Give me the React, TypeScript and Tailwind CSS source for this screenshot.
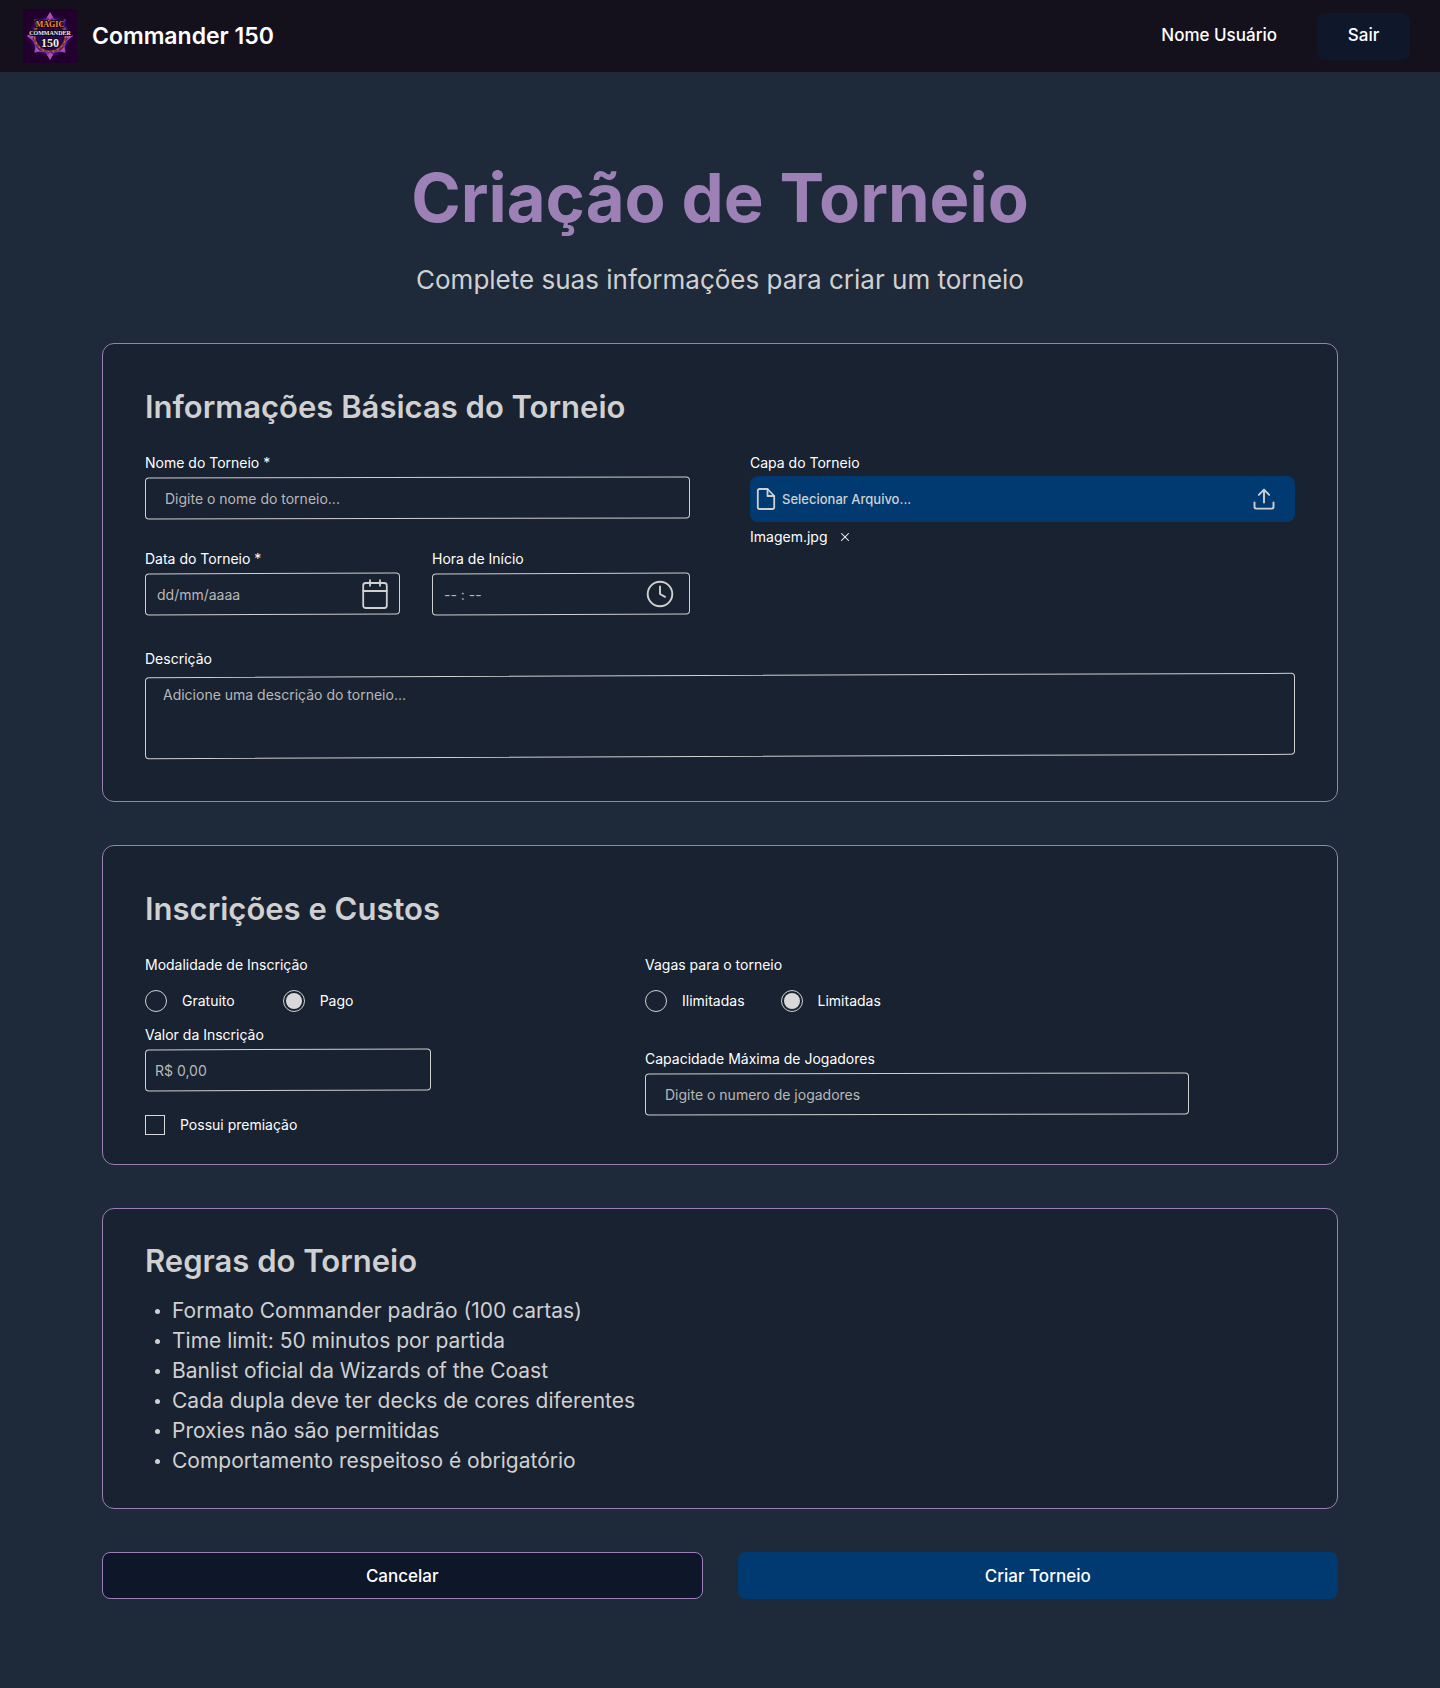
import type { InputHTMLAttributes, ReactNode } from "react";
import { X } from "lucide-react";

const rules = [
  "Formato Commander padrão (100 cartas)",
  "Time limit: 50 minutos por partida",
  "Banlist oficial da Wizards of the Coast",
  "Cada dupla deve ter decks de cores diferentes",
  "Proxies não são permitidas",
  "Comportamento respeitoso é obrigatório",
];

function Logo() {
  return (
    <svg viewBox="0 0 54 54" className="size-[54px] shrink-0" role="img" aria-label="Magic Commander 150">
      <defs>
        <radialGradient id="glow">
          <stop offset="0" stopColor="#2c0a5c" />
          <stop offset="0.75" stopColor="#5a10b4" />
          <stop offset="1" stopColor="#22002e" stopOpacity="0" />
        </radialGradient>
      </defs>
      <rect width="54" height="54" fill="#22002e" />
      <circle cx="27" cy="27" r="22" fill="url(#glow)" />
      <path
        d="M27 5l4 6 5 1 6-1-1 6 2 5 6 5-6 5-2 5 1 6-6-1-5 1-4 6-4-6-5-1-6 1 1-6-2-5-6-5 6-5 2-5-1-6 6 1 5-1z"
        fill="none"
        stroke="#8a3fae"
        strokeWidth="1.2"
      />
      <g fill="#b04fb0">
        <path d="M27 3l3 5-3 3-3-3z" />
        <path d="M27 51l3-5-3-3-3 3z" />
        <path d="M4 27l5-3 3 3-3 3z" />
        <path d="M50 27l-5-3-3 3 3 3z" />
        <path d="M12 11l5 1-4 4z" />
        <path d="M42 11l-5 1 4 4z" />
        <path d="M12 43l5-1-4-4z" />
        <path d="M42 43l-5-1 4-4z" />
      </g>
      <circle cx="27" cy="27" r="15.5" fill="#25074a" stroke="#7d3a2c" strokeWidth="2.2" />
      <circle cx="27" cy="27" r="15.5" fill="none" stroke="#c8702e" strokeWidth="1.2" strokeDasharray="2 3" />
      <g textAnchor="middle" fontFamily="Liberation Serif, serif" fontWeight="700" stroke="#12051c" paintOrder="stroke">
        <text x="27" y="18" fontSize="8" fill="#f0902a" strokeWidth="2">MAGIC</text>
        <text x="27" y="26" fontSize="6" fill="#f2ecf4" strokeWidth="2">COMMANDER</text>
        <text x="27" y="38" fontSize="12" fill="#f4efe0" strokeWidth="1.6">150</text>
      </g>
    </svg>
  );
}

function CalendarIcon() {
  return (
    <svg viewBox="0 0 26 30" className="h-[30px] w-[26px] shrink-0" fill="none" stroke="#d0d0d0" strokeWidth="1.8" strokeLinecap="round" strokeLinejoin="round" aria-hidden="true">
      <rect x="1.2" y="4" width="23.6" height="25" rx="2.5" />
      <path d="M1.2 12h23.6M8 1.2v5.6M18 1.2v5.6" />
    </svg>
  );
}

function ClockIcon() {
  return (
    <svg viewBox="0 0 28 28" className="size-7 shrink-0" fill="none" stroke="#d0d0d0" strokeWidth="1.9" strokeLinecap="round" strokeLinejoin="round" aria-hidden="true">
      <circle cx="14" cy="14" r="12.3" />
      <path d="M14 6.5V14l5 2.8" />
    </svg>
  );
}

function FileIcon() {
  return (
    <svg viewBox="0 0 20 24" className="h-6 w-5 shrink-0" fill="none" stroke="#d0d0d0" strokeWidth="1.8" strokeLinecap="round" strokeLinejoin="round" aria-hidden="true">
      <path d="M11.5 2H3.6C2.4 2 1.8 2.8 1.8 3.8v16.4c0 1 .7 1.8 1.8 1.8h12.8c1.1 0 1.8-.8 1.8-1.8V9z" />
      <path d="M11.5 2v7h6.7" />
    </svg>
  );
}

function UploadIcon() {
  return (
    <svg viewBox="0 0 22 22" className="size-[22px] shrink-0" fill="none" stroke="#d0d0d0" strokeWidth="1.9" strokeLinecap="round" strokeLinejoin="round" aria-hidden="true">
      <path d="M1.5 14.5v4.2c0 1.1.8 1.9 1.9 1.9h15.2c1.1 0 1.9-.8 1.9-1.9v-4.2" />
      <path d="M11 14.5V1.8M5.8 6.8L11 1.6l5.2 5.2" />
    </svg>
  );
}

function Card({ title, className, children }: { title: string; className: string; children: ReactNode }) {
  return (
    <section className={`rounded-xl border border-[#9b7fb6] bg-[#192230] px-[42px] ${className}`}>
      <h2 className="text-[31px] leading-10 font-semibold text-[#d0d0d0]">{title}</h2>
      {children}
    </section>
  );
}

interface FieldProps extends InputHTMLAttributes<HTMLInputElement> {
  id: string;
  label: string;
  padding: string;
  tilt: string;
  icon?: ReactNode;
}

function Field({ id, label, padding, tilt, icon, ...rest }: FieldProps) {
  return (
    <div className="flex flex-col gap-1">
      <label htmlFor={id}>{label}</label>
      <div className={`relative flex h-[42px] items-center ${padding}`}>
        <span className={`pointer-events-none absolute inset-0 rounded border border-[#d0d0d0] ${tilt}`} />
        <input
          id={id}
          type="text"
          className="h-full w-full min-w-0 bg-transparent text-[#d0d0d0] outline-none placeholder:text-[#b8b8b8]"
          {...rest}
        />
        {icon}
      </div>
    </div>
  );
}

function Choice({ name, label, checked }: { name: string; label: string; checked?: boolean }) {
  return (
    <label className="flex items-center gap-[15px]">
      <input
        type="radio"
        name={name}
        defaultChecked={checked}
        className="size-[22px] shrink-0 appearance-none rounded-full border border-[#d0d0d0] bg-clip-content p-[2px] checked:bg-[#d9d9d9]"
      />
      {label}
    </label>
  );
}

export default function App() {
  return (
    <div className="min-h-screen bg-[#1e293a] font-[Inter,sans-serif] text-white">
      <header className="flex h-[72px] items-center justify-between bg-[#14111d] pr-[30px] pl-[23px]">
        <div className="flex items-center gap-[15px]">
          <Logo />
          <span className="text-[23px] font-semibold">Commander 150</span>
        </div>
        <div className="flex items-center gap-10">
          <span className="text-[17px] font-medium">Nome Usuário</span>
          <button type="button" className="h-[47px] w-[93px] rounded-lg bg-[#0f172a] text-[17px] font-medium">
            Sair
          </button>
        </div>
      </header>

      <main className="mx-auto max-w-[1236px] pt-[86px] pb-[88px]">
        <h1 className="text-center text-[67px] leading-[80px] font-bold text-[#9c80b6]">Criação de Torneio</h1>
        <p className="mt-6 text-center text-[26px] leading-9 text-[#d0d0d0]">
          Complete suas informações para criar um torneio
        </p>

        <form className="mt-[45px] flex flex-col gap-[43px] text-[14px] leading-5">
          <Card title="Informações Básicas do Torneio" className="pt-[43px] pb-[44px]">
            <div className="mt-[26px] grid grid-cols-2 gap-[60px]">
              <div className="flex flex-col gap-[30px]">
                <Field id="nome" label="Nome do Torneio *" placeholder="Digite o nome do torneio..." padding="px-5" tilt="-skew-y-[0.1deg]" />
                <div className="grid grid-cols-[255fr_258fr] gap-8">
                  <Field id="data" label="Data do Torneio *" placeholder="dd/mm/aaaa" padding="px-3" tilt="-skew-y-[0.2deg]" icon={<CalendarIcon />} />
                  <Field id="hora" label="Hora de Início" placeholder="-- : --" padding="pl-3 pr-4" tilt="-skew-y-[0.2deg]" icon={<ClockIcon />} />
                </div>
              </div>
              <div className="flex flex-col items-start">
                <span id="capa">Capa do Torneio</span>
                <button
                  type="button"
                  aria-describedby="capa"
                  className="mt-[3px] flex h-[46px] w-full items-center gap-[6px] rounded-lg bg-[#003a70] pr-5 pl-[6px] text-[13px] font-medium text-[#d0d0d0]"
                >
                  <FileIcon />
                  <span className="flex-1 text-left">Selecionar Arquivo...</span>
                  <UploadIcon />
                </button>
                <div className="mt-[5px] flex items-center gap-[11px]">
                  <span>Imagem.jpg</span>
                  <button type="button" aria-label="Remover Imagem.jpg">
                    <X size={14} strokeWidth={1.8} />
                  </button>
                </div>
              </div>
            </div>
            <div className="mt-[34px] flex flex-col gap-[6px]">
              <label htmlFor="descricao">Descrição</label>
              <div className="relative h-[82px]">
                <span className="pointer-events-none absolute inset-0 -skew-y-[0.22deg] rounded border border-[#d0d0d0]" />
                <textarea
                  id="descricao"
                  placeholder="Adicione uma descrição do torneio..."
                  className="h-full w-full resize-none bg-transparent px-[18px] py-[10px] text-[#d0d0d0] outline-none placeholder:text-[#b8b8b8]"
                />
              </div>
            </div>
          </Card>

          <Card title="Inscrições e Custos" className="pt-[43px] pb-[29px]">
            <div className="mt-[26px] grid grid-cols-[500fr_650fr]">
              <div>
                <fieldset>
                  <legend>Modalidade de Inscrição</legend>
                  <div className="mt-[15px] flex gap-12">
                    <Choice name="modalidade" label="Gratuito" />
                    <Choice name="modalidade" label="Pago" checked />
                  </div>
                </fieldset>
                <div className="mt-[13px] max-w-[286px]">
                  <Field id="valor" label="Valor da Inscrição" placeholder="R$ 0,00" padding="px-[10px]" tilt="-skew-y-[0.2deg]" />
                </div>
                <label className="mt-6 flex items-center gap-[15px]">
                  <input type="checkbox" className="size-5 shrink-0 appearance-none border border-[#d9d9d9] bg-clip-content p-1 checked:bg-[#d9d9d9]" />
                  Possui premiação
                </label>
              </div>
              <div>
                <fieldset>
                  <legend>Vagas para o torneio</legend>
                  <div className="mt-[15px] flex gap-9">
                    <Choice name="vagas" label="Ilimitadas" />
                    <Choice name="vagas" label="Limitadas" checked />
                  </div>
                </fieldset>
                <div className="mt-[37px] max-w-[544px]">
                  <Field id="capacidade" label="Capacidade Máxima de Jogadores" placeholder="Digite o numero de jogadores" padding="px-5" tilt="-skew-y-[0.1deg]" />
                </div>
              </div>
            </div>
          </Card>

          <Card title="Regras do Torneio" className="pt-8 pb-8">
            <ul className="mt-[15px] list-none text-[21px] leading-[30px] text-[#d0d0d0]">
              {rules.map((rule) => (
                <li key={rule} className="flex items-center gap-3 pl-[10px]">
                  <span className="size-[5px] shrink-0 rounded-full bg-[#d0d0d0]" />
                  {rule}
                </li>
              ))}
            </ul>
          </Card>

          <div className="grid grid-cols-2 gap-[35px] text-[17px] font-medium">
            <button type="button" className="h-[47px] rounded-lg border border-[#9b7fb6] bg-[#0e1629]">
              Cancelar
            </button>
            <button type="submit" className="h-[47px] rounded-lg bg-[#003a70]">
              Criar Torneio
            </button>
          </div>
        </form>
      </main>
    </div>
  );
}
